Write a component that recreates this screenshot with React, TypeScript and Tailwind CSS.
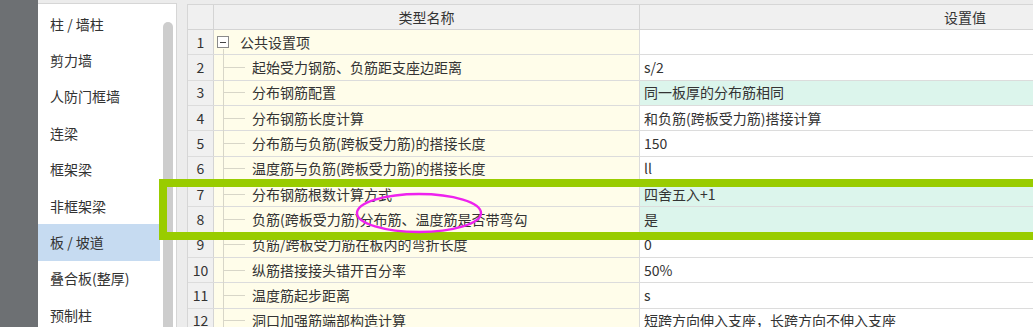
import React from 'react';

const sideItems = ['柱 / 墙柱', '剪力墙', '人防门框墙', '连梁', '框架梁', '非框架梁', '板 / 坡道', '叠合板(整厚)', '预制柱'];

const rows: { name: string; value: string; mint?: boolean }[] = [
    { name: '公共设置项', value: '' },
    { name: '起始受力钢筋、负筋距支座边距离', value: 's/2' },
    { name: '分布钢筋配置', value: '同一板厚的分布筋相同', mint: true },
    { name: '分布钢筋长度计算', value: '和负筋(跨板受力筋)搭接计算' },
    { name: '分布筋与负筋(跨板受力筋)的搭接长度', value: '150' },
    { name: '温度筋与负筋(跨板受力筋)的搭接长度', value: 'll' },
    { name: '分布钢筋根数计算方式', value: '四舍五入+1', mint: true },
    { name: '负筋(跨板受力筋)分布筋、温度筋是否带弯勾', value: '是', mint: true },
    { name: '负筋/跨板受力筋在板内的弯折长度', value: '0' },
    { name: '纵筋搭接接头错开百分率', value: '50%' },
    { name: '温度筋起步距离', value: 's' },
    { name: '洞口加强筋端部构造计算', value: '短跨方向伸入支座，长跨方向不伸入支座' },
];

const font = { fontFamily: '"Noto Sans CJK SC", "Noto Sans", sans-serif' };

const App: React.FC = () => {
    return (
        <div className="relative w-[1033px] h-[327px] overflow-hidden bg-[#ececec] flex text-[14px] text-[#333]" style={font}>
            {/* dark strip */}
            <div className="w-[38px] h-full bg-[#6d7073] shrink-0" />

            {/* Sidebar */}
            <div className="w-[139px] shrink-0 mt-[3px] bg-white border-t border-r border-[#d6d6d6] flex relative">
                <div className="flex-1 flex flex-col pt-[2px]">
                    {sideItems.map((s, i) => (
                        <div
                            key={s}
                            className={`h-[36.4px] shrink-0 flex items-center pl-[12px] ${i === 6 ? 'bg-[#c6dbf1] mr-[-1px]' : ''}`}
                        >
                            {s}
                        </div>
                    ))}
                </div>
                <div className="w-[17px] flex justify-center pt-[18px]">
                    <div className="w-[10px] h-[400px] rounded-full bg-[#cdcdcd]" />
                </div>
            </div>

            {/* Table */}
            <div className="flex-1 min-w-0 ml-[10px] mt-[4px] bg-white border-l border-t border-[#d6d6d6] flex flex-col overflow-hidden">
                <div className="flex h-[25px] bg-[#f0f0f0] border-b border-[#d4d4d4] shrink-0">
                    <div className="w-[26px] shrink-0 border-r border-[#d4d4d4]" />
                    <div className="w-[426px] shrink-0 border-r border-[#d4d4d4] flex items-center justify-center">类型名称</div>
                    <div className="w-[650px] shrink-0 flex items-center justify-center">设置值</div>
                </div>
                {rows.map((r, i) => (
                    <div key={i} className="flex h-[25.35px] shrink-0 border-b border-[#dcdcdc]">
                        <div className="w-[26px] shrink-0 bg-[#f0f0f0] border-r border-[#d4d4d4] flex items-center justify-center">
                            {i + 1}
                        </div>
                        <div className="w-[426px] shrink-0 bg-[#fffdea] border-r border-[#dcdcdc] relative flex items-center">
                            {i === 0 ? (
                                <>
                                    <div className="ml-[3px] w-[12px] h-[12px] border border-[#8a8a8a] bg-white flex items-center justify-center">
                                        <div className="w-[6px] h-px bg-[#444]" />
                                    </div>
                                    <span className="ml-[11px]">{r.name}</span>
                                    <div className="absolute left-[9px] top-[19px] bottom-[-1px] w-px bg-[#d8d6c8]" />
                                </>
                            ) : (
                                <>
                                    <div className="absolute left-[9px] top-0 bottom-[-1px] w-px bg-[#d8d6c8]" />
                                    <div className="ml-[9px] w-[22px] h-px bg-[#d8d6c8]" />
                                    <span className="ml-[7px] whitespace-nowrap">{r.name}</span>
                                </>
                            )}
                        </div>
                        <div className={`flex-1 flex items-center pl-[4px] whitespace-nowrap ${r.mint ? 'bg-[#dcf5ec]' : 'bg-white'}`}>
                            {r.value}
                        </div>
                    </div>
                ))}
            </div>

            {/* annotations */}
            <div className="absolute left-[159px] top-[179px] w-[900px] h-[61px] border-[8px] border-[#99cc00]" />
            <svg className="absolute left-0 top-0 pointer-events-none" width="1033" height="327">
                <ellipse cx="419" cy="213" rx="62" ry="19" fill="none" stroke="#ee22ee" strokeWidth="2.4" />
            </svg>
        </div>
    );
};

export default App;
